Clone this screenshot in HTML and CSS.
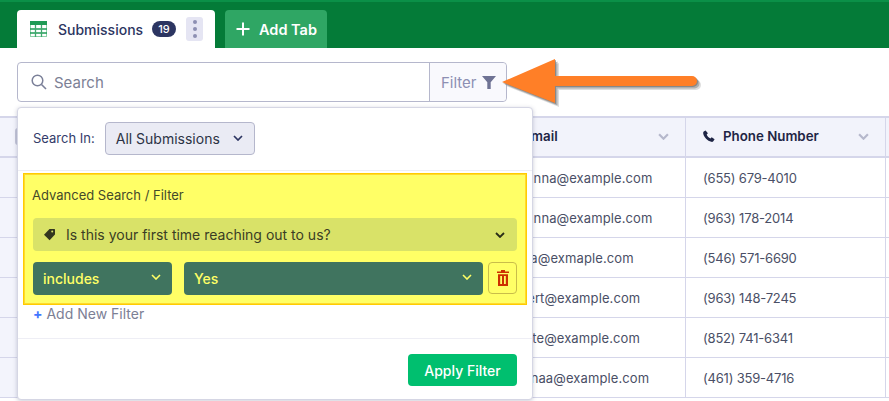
FILE: index.html
```html
<!DOCTYPE html>
<html lang="en">
<head>
<meta charset="utf-8">
<title>Submissions</title>
<link rel="stylesheet" href="styles.css">
</head>
<body>
<header class="tabbar">
  <div class="tab">
    <svg class="grid-icon" viewBox="0 0 17 16"><rect x=".5" y=".5" width="16" height="15" fill="#fff" stroke="#8fd0a8"/><rect width="17" height="4" fill="#1f9a55"/><path d="M0 8h17M0 12h17" stroke="#1f9a55" stroke-width="1.300" fill="none"/><path d="M5.500 4v12M11.500 4v12" stroke="#3fa96d" stroke-width="1.300" fill="none"/></svg>
    <span class="tab-label">Submissions</span>
    <span class="badge">19</span>
    <span class="dots"><i></i><i></i><i></i></span>
  </div>
  <div class="add-tab">
    <svg class="plus" viewBox="0 0 14 14"><path d="M7 .5v13M.5 7h13" stroke="#fff" stroke-width="2" fill="none"/></svg>
    <span>Add Tab</span>
  </div>
</header>

<section class="toolbar">
  <div class="searchbox">
    <div class="search-field">
      <svg class="search-icon" viewBox="0 0 16 16"><circle cx="6.500" cy="6.500" r="5.300" stroke="#7b8099" stroke-width="1.500" fill="none"/><path d="M10.500 10.500l4.500 4.500" stroke="#7b8099" stroke-width="1.600" fill="none"/></svg>
      <span>Search</span>
    </div>
    <div class="filter-btn">
      <span>Filter</span>
      <svg class="funnel" viewBox="0 0 14 13"><path d="M0 0h14L8.700 6.200V13H5.300V6.200z" fill="#6f7394"/></svg>
    </div>
  </div>
</section>

<section class="table">
  <div class="row head">
    <div class="cell lead"><span class="check"></span></div>
    <div class="cell"><svg class="phone" viewBox="0 0 12 12"><path d="M0 2h12v8H0z" fill="#0a1551"/></svg><span class="h-text">Email</span><svg class="chev" viewBox="0 0 10 6"><path d="M1 1l4 4 4-4" stroke="#b6b8cc" stroke-width="2" fill="none"/></svg></div>
    <div class="cell"><svg class="phone" viewBox="0 0 12 12"><path d="M2.600.4L.7 1.500C.2 2 0 2.700.2 3.500c.7 3.700 4.300 7.500 8.100 8.300.8.200 1.500 0 2-.5l1.300-2-2.900-2-1.300 1.300C6 8 4.200 6.200 3.700 4.600l1.200-1.300z" fill="#1f2545"/></svg><span class="h-text">Phone Number</span><svg class="chev" viewBox="0 0 10 6"><path d="M1 1l4 4 4-4" stroke="#b6b8cc" stroke-width="2" fill="none"/></svg></div>
    <div class="cell tail"></div>
  </div>
  <div class="row"><div class="cell lead"></div><div class="cell email">Johanna@example.com</div><div class="cell tel">(655) 679-4010</div><div class="cell tail"></div></div>
  <div class="row"><div class="cell lead"></div><div class="cell email">Johanna@example.com</div><div class="cell tel">(963) 178-2014</div><div class="cell tail"></div></div>
  <div class="row"><div class="cell lead"></div><div class="cell email">Sonia@exmaple.com</div><div class="cell tel">(546) 571-6690</div><div class="cell tail"></div></div>
  <div class="row"><div class="cell lead"></div><div class="cell email">Robert@example.com</div><div class="cell tel">(963) 148-7245</div><div class="cell tail"></div></div>
  <div class="row"><div class="cell lead"></div><div class="cell email">Arlette@example.com</div><div class="cell tel">(852) 741-6341</div><div class="cell tail"></div></div>
  <div class="row"><div class="cell lead"></div><div class="cell email">Marinaa@example.com</div><div class="cell tel">(461) 359-4716</div><div class="cell tail"></div></div>
</section>

<aside class="panel">
  <div class="search-in">
    <span class="si-label">Search In:</span>
    <div class="si-select"><span>All Submissions</span><svg class="si-chev" viewBox="0 0 10 6"><path d="M1 1l4 4 4-4" stroke="#2c3561" stroke-width="1.700" fill="none"/></svg></div>
  </div>
  <div class="highlight">
    <div class="adv-title">Advanced Search / Filter</div>
    <div class="question">
      <svg class="tag" viewBox="0 0 13 13"><path d="M5.500 1H10c.800 0 1 .300 1 1v4.500L5.600 12.200 0 6.800z" transform="translate(1 0)" fill="#33361f"/><circle cx="9.200" cy="3.400" r="1" fill="#d9e268"/></svg>
      <span class="q-text">Is this your first time reaching out to us?</span>
      <svg class="q-chev" viewBox="0 0 10 6"><path d="M1 1l4 4 4-4" stroke="#2a2d18" stroke-width="1.800" fill="none"/></svg>
    </div>
    <div class="conds">
      <div class="cond cond-a"><span>includes</span><svg class="y-chev" viewBox="0 0 10 6"><path d="M1 1l4 4 4-4" stroke="#ffff66" stroke-width="1.600" fill="none"/></svg></div>
      <div class="cond cond-b"><span>Yes</span><svg class="y-chev" viewBox="0 0 10 6"><path d="M1 1l4 4 4-4" stroke="#ffff66" stroke-width="1.600" fill="none"/></svg></div>
      <div class="trash"><svg viewBox="0 0 12 16"><path d="M4 0h4v1.500h4V3H0V1.500h4zM1 4.200h10V16H1zM3.200 6v8h1.800V6zM7 6v8h1.800V6z" fill="#cc3000" fill-rule="evenodd"/></svg></div>
    </div>
  </div>
  <div class="add-filter"><span class="blue-plus">+</span> Add New Filter</div>
  <div class="panel-foot"><span class="apply">Apply Filter</span></div>
</aside>

<svg class="arrow" viewBox="0 0 210 56" aria-hidden="true">
  <path d="M3 25L56 2v17h137a5 5 0 0 1 0 10H56v17z" fill="#b5b5b5" opacity=".45" transform="translate(4 4)"/>
  <path d="M3 25L56 2v17h137a5 5 0 0 1 0 10H56v17z" fill="#8f8f8f" opacity=".6" transform="translate(2.500 2.500)"/>
  <path d="M3 25L56 2v17h137a5 5 0 0 1 0 10H56v17z" fill="#777" opacity=".7" transform="translate(1 1)"/>
  <path d="M3 25L56 2v17h137a5 5 0 0 1 0 10H56v17z" fill="#ff7f27"/>
</svg>
</body>
</html>
```
FILE: styles.css
```css
* { box-sizing: border-box; }
html, body { margin: 0; padding: 0; }
body {
  position: relative;
  width: 889px;
  height: 401px;
  overflow: hidden;
  background: #fff;
  font-family: Inter, "Liberation Sans", sans-serif;
  color: #2c3345;
}
.tabbar {
  height: 48px;
  display: flex;
  align-items: flex-end;
  gap: 10px;
  padding-left: 17px;
  background: #047b38;
  border-top: 2px solid #0b9048;
}
.tab {
  width: 198px;
  height: 38px;
  display: flex;
  align-items: center;
  padding-left: 13px;
  background: #fff;
  border-radius: 4px 4px 0 0;
}
.grid-icon { width: 17px; height: 16px; flex: none; }
.tab-label { margin-left: 11px; font-size: 14px; font-weight: 500; color: #2c3561; width: 94px; }
.badge {
  width: 24px; height: 16px; border-radius: 8px;
  background: #2c3561; color: #fff;
  font-size: 11px; line-height: 16px; text-align: center; font-weight: 500;
}
.dots {
  width: 17px; height: 24px; margin-left: 10px;
  display: flex; flex-direction: column; align-items: center; justify-content: center; gap: 3px;
  background: #e5e5f3; border-radius: 3px;
}
.dots i { width: 4px; height: 4px; border-radius: 50%; background: #8d8fb3; }
.add-tab {
  width: 102px; height: 38px;
  display: flex; align-items: center; gap: 9px;
  padding-left: 11px;
  background: #2fa664; color: #fff;
  border-radius: 4px 4px 0 0;
  font-size: 14.500px; font-weight: 600;
}
.plus { width: 14px; height: 14px; }
.toolbar { height: 68px; padding: 14px 0 0 17px; }
.searchbox {
  width: 490px; height: 40px;
  display: flex;
  border: 1px solid #b5b7cc;
  border-radius: 4px;
}
.search-field {
  width: 411px;
  display: flex; align-items: center; gap: 7px;
  padding-left: 13px;
  font-size: 15px; color: #7c8095;
}
.search-icon { width: 16px; height: 16px; }
.filter-btn {
  flex: 1;
  display: flex; align-items: center; gap: 5px;
  padding-left: 11px;
  border-left: 1px solid #b5b7cc;
  background: #f9f9fd;
  border-radius: 0 4px 4px 0;
  font-size: 15px; color: #8d8fb3;
}
.funnel { width: 14px; height: 13px; }
.table { border-top: 2px solid #d5d6ea; }
.row {
  display: grid;
  grid-template-columns: 486px 200px 200px 3px;
  height: 40px;
  border-bottom: 1px solid #d5d6ea;
  font-size: 13px;
  color: #4a4f66;
}
.row.head { border-bottom-width: 2px; background: #f2f3fb; color: #1f2545; font-weight: 600; }
.head .cell { padding-bottom: 2px; }
.cell {
  display: flex; align-items: center;
  padding-left: 17px;
  border-right: 1px solid #d5d6ea;
  white-space: nowrap;
  overflow: hidden;
  position: relative;
}
.email { letter-spacing: .1px; }
.tel { letter-spacing: -.2px; }
.lead { background: #f3f4fc; border-right: 0; padding-left: 15px; }
.tail { border-right: 0; padding: 0; }
.check { width: 16px; height: 17px; background: #c3c5d8; border-radius: 3px; }
.h-text { font-size: 13.300px; }
.chev { position: absolute; right: 16px; top: 15px; width: 11px; height: 7px; }
.phone { width: 12px; height: 12px; margin-right: 8px; }
.panel {
  position: absolute;
  left: 17px; top: 107px;
  width: 516px; height: 293px;
  display: flex; flex-direction: column;
  background: #fff;
  border: 1px solid #d5d6e4;
  border-radius: 4px;
  box-shadow: 0 1px 4px rgba(80, 84, 120, .3);
}
.search-in {
  height: 63px;
  display: flex; align-items: center; gap: 10px;
  padding: 0 0 2px 15px;
  border-bottom: 1px solid #eeeef5;
}
.si-label { font-size: 13px; color: #343c6a; }
.si-select {
  width: 150px; height: 33px;
  display: flex; align-items: center; justify-content: space-between;
  padding: 0 11px 0 10px;
  background: #eaebf4;
  border: 1px solid #b5b7cc;
  border-radius: 4px;
  font-size: 14px; color: #2c3345;
}
.si-chev { width: 10px; height: 6px; }
.highlight {
  margin: 2px 5px 0;
  height: 132px;
  padding: 0 9px;
  background: #ffff66;
  border: 1px solid #ffcc00;
  box-shadow: inset 0 0 0 1px #ffd92e;
}
.adv-title { height: 44px; padding-top: 13px; margin-left: -1px; font-size: 13px; line-height: 16px; color: #444a2a; }
.question {
  height: 33px;
  display: flex; align-items: center;
  padding: 0 12px 0 10px;
  background: #d9e268;
  border-radius: 4px;
  font-size: 14px; color: #3a3d24;
}
.tag { width: 13px; height: 13px; }
.q-text { margin-left: 10px; flex: 1; }
.q-chev { width: 10px; height: 6px; }
.conds { display: flex; margin-top: 11px; }
.cond {
  height: 33px;
  display: flex; align-items: center; justify-content: space-between;
  padding: 0 11px 0 10px;
  background: #40745f;
  border-radius: 4px;
  color: #ffff66;
  font-size: 14px; font-weight: 500;
}
.cond-a { width: 139px; }
.cond-b { width: 299px; margin-left: 12px; }
.y-chev { width: 10px; height: 6px; margin-top: -3px; }
.trash {
  width: 29px; height: 32px; margin-left: 5px;
  display: flex; align-items: center; justify-content: center;
  border: 1px solid #c9bd4a;
  border-radius: 4px;
}
.trash svg { width: 12px; height: 16px; }
.add-filter { height: 34px; padding: 0 0 0 15px; font-size: 14px; line-height: 17px; color: #7c8095; border-bottom: 1px solid #eeeef5; }
.blue-plus { color: #4277ff; font-weight: 700; }
.panel-foot { flex: 1; display: flex; justify-content: flex-end; padding: 15px 15px 0 0; }
.apply {
  width: 109px; height: 32px;
  display: flex; align-items: center; justify-content: center;
  background: #00bf6f; color: #fff;
  border-radius: 4px;
  font-size: 14px; font-weight: 500;
}
.arrow { position: absolute; left: 499px; top: 57px; width: 210px; height: 56px; }
```
